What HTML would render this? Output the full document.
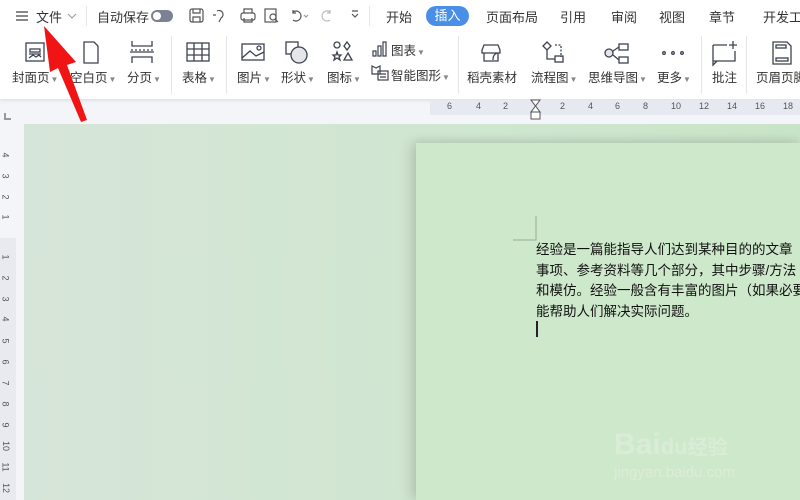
<!DOCTYPE html>
<html><head><meta charset="utf-8"><style>
*{margin:0;padding:0;box-sizing:border-box}
body{width:800px;height:500px;overflow:hidden;position:relative;background:#f4f5f8;font-family:"Liberation Sans","Noto Sans CJK SC",sans-serif;color:#333}
.top{position:absolute;left:0;top:0;width:800px;height:32px;background:#fff}
.t{position:absolute;font-size:13px;top:7px;color:#333;white-space:nowrap}
.rib{position:absolute;left:0;top:32px;width:800px;height:67px;background:#fff;box-shadow:0 2px 3px rgba(0,0,0,.08)}
.lb{position:absolute;font-size:12.5px;color:#333;white-space:nowrap}
.dd{font-size:8px;color:#888;margin-left:1px}
.sep{position:absolute;width:1px;background:#e5e7eb}
.ic{position:absolute}
.doc{position:absolute;left:24px;top:124px;width:776px;height:376px;background:linear-gradient(90deg,#d6e5d9,#cfe6cf 60%,#c8e4c8)}
.page{position:absolute;left:416px;top:143px;width:384px;height:357px;background:#cee8cb;box-shadow:-6px 0 12px rgba(0,0,0,.12),0 -3px 8px rgba(0,0,0,.06)}
.txt{position:absolute;left:536px;top:240px;font-size:13.5px;line-height:20.5px;color:#111;white-space:nowrap;font-family:"Liberation Sans","WenQuanYi Zen Hei",sans-serif}
.vr{position:absolute;left:0;top:238px;width:16px;height:262px;background:#e8eaf0}
.vn{position:absolute;left:3px;font-size:9px;color:#555;transform:rotate(90deg)}
.hn{position:absolute;top:101px;font-size:9px;color:#555}
</style></head><body>
<div class="top">
 <svg class="ic" style="left:15px;top:10px" width="14" height="12"><path d="M1 2h12M1 6h12M1 10h12" stroke="#444" stroke-width="1.3"/></svg>
 <div class="t" style="left:36px">文件</div>
 <svg class="ic" style="left:67px;top:12px" width="10" height="8"><path d="M1 2l4 4 4-4" stroke="#999" fill="none"/></svg>
 <div class="sep" style="left:86px;top:6px;height:20px"></div>
 <div class="t" style="left:97px">自动保存</div>
 <div style="position:absolute;left:151px;top:10px;width:22px;height:12px;border-radius:6px;background:#7c8294"><div style="position:absolute;left:2px;top:2px;width:8px;height:8px;border-radius:4px;background:#fff"></div></div>
 <svg class="ic" style="left:189px;top:7px" width="180" height="18" fill="none" stroke="#555" stroke-width="1.2">
  <rect x="1" y="2" width="13" height="13" rx="2"/><path d="M4 2v4h7V2M4 15v-5h7v5"/>
  <path d="M28 4a4 4 0 1 1 4 7l-2 4M27 8h-3"/>
  <rect x="52" y="6" width="14" height="7" rx="2"/><path d="M55 6V2h8v4M55 11v4h8v-4"/>
  <rect x="76" y="2" width="11" height="13"/><circle cx="84" cy="10" r="3"/><path d="M86 12l3 3"/>
  <path d="M104 5a5 5 0 1 1 0 8M104 3v3h3" /><path d="M115 8l2 2 2-2" stroke="#999"/>
  <path d="M141 5a5 5 0 1 0 0 8M141 3v3h-3" stroke="#bbb"/>
  <path d="M163 7l3 3 3-3M163 4h6"/>
 </svg>
 <div class="sep" style="left:369px;top:6px;height:20px"></div>
 <div class="t" style="left:386px">开始</div>
 <div style="position:absolute;left:426px;top:6px;width:43px;height:20px;border-radius:10px;background:#4a8fe7;color:#fff;font-size:13px;text-align:center;line-height:20px">插入</div>
 <div class="t" style="left:486px">页面布局</div>
 <div class="t" style="left:560px">引用</div>
 <div class="t" style="left:611px">审阅</div>
 <div class="t" style="left:659px">视图</div>
 <div class="t" style="left:709px">章节</div>
 <div class="t" style="left:763px">开发工具</div>
</div>
<div class="rib">
 <svg class="ic" style="left:0;top:9px" width="800" height="26" fill="none" stroke="#3d4250" stroke-width="1.3">
  <rect x="26" y="2" width="18" height="18"/><path d="M29 13h12M29 17l4-3 3 2 3-2 2 2"/><rect x="30" y="8" width="10" height="3"/>
  <path d="M84 1h10l4 4v17H84z"/>
  <path d="M132 0v5h20V0M132 22v-6h20v6M130 11h24" /><path d="M131 9h22" stroke-dasharray="2 2"/>
  <rect x="187" y="2" width="22" height="18"/><path d="M187 8h22M187 14h22M194 2v18M202 2v18"/>
  <rect x="242" y="3" width="22" height="16"/><path d="M242 17l8-7 6 5 8-4" /><circle cx="259" cy="7" r="2"/>
  <rect x="286" y="1" width="12" height="12"/><circle cx="299" cy="14" r="8" fill="#e4e6ea"/>
  <circle cx="337" cy="4" r="3"/><path d="M347 1l3 4-3 4-3-4z"/><path d="M337 11l1 3h3l-2 2 1 3-3-2-3 2 1-3-2-2h3z"/><path d="M348 12l4 7h-8z"/>
  <path d="M484 4h14l2 5v3h-18V9z M484 12v8h14v-8"/><path d="M493 19c0-5 2-6 4-7"/>
  <path d="M543 5l4-4 4 4-4 4z"/><path d="M555 4h6v12" stroke-dasharray="2 1.5"/><rect x="555" y="15" width="8" height="6"/><path d="M547 9v9h8"/>
  <circle cx="609" cy="12" r="4" fill="#e4e6ea"/><rect x="619" y="3" width="9" height="6"/><rect x="619" y="16" width="9" height="6"/><path d="M613 10l6-4M613 14l6 5"/>
  <circle cx="664" cy="12" r="1.3"/><circle cx="673" cy="12" r="1.3"/><circle cx="682" cy="12" r="1.3"/>
  <path d="M713 4h14M735 10v10h-22v-16M713 20v4l4-4M729 4h8M733 0v8"/>
  <path d="M773 1h14l4 4v18h-18z"/><rect x="776" y="17" width="12" height="3"/><rect x="776" y="4" width="10" height="3"/>
 </svg>
 <svg class="ic" style="left:371px;top:9px" width="18" height="16" fill="none" stroke="#3d4250" stroke-width="1.2"><path d="M2 10h3v5H2zM7 5h3v10H7zM12 1h3v14h-3z"/></svg>
 <div class="lb" style="left:12px;top:35px">封面页<span class="dd">▼</span></div>
 <div class="lb" style="left:70px;top:35px">空白页<span class="dd">▼</span></div>
 <div class="lb" style="left:127px;top:35px">分页<span class="dd">▼</span></div>
 <div class="sep" style="left:171px;top:4px;height:58px"></div>
 <div class="lb" style="left:182px;top:35px">表格<span class="dd">▼</span></div>
 <div class="sep" style="left:226px;top:4px;height:58px"></div>
 <div class="lb" style="left:237px;top:35px">图片<span class="dd">▼</span></div>
 <div class="lb" style="left:281px;top:35px">形状<span class="dd">▼</span></div>
 <div class="lb" style="left:327px;top:35px">图标<span class="dd">▼</span></div>
 <div class="lb" style="left:391px;top:8px">图表<span class="dd">▼</span></div>
 <svg class="ic" style="left:371px;top:33px" width="18" height="16" fill="none" stroke="#3d4250" stroke-width="1.2"><path d="M1 1l4 2 4-2v8H1z"/><rect x="7" y="6" width="10" height="9"/><path d="M9 9h6M9 12h6"/></svg>
 <div class="lb" style="left:391px;top:33px">智能图形<span class="dd">▼</span></div>
 <div class="sep" style="left:458px;top:4px;height:58px"></div>
 <div class="lb" style="left:467px;top:35px">稻壳素材</div>
 <div class="lb" style="left:531px;top:35px">流程图<span class="dd">▼</span></div>
 <div class="lb" style="left:588px;top:35px">思维导图<span class="dd">▼</span></div>
 <div class="lb" style="left:657px;top:35px">更多<span class="dd">▼</span></div>
 <div class="sep" style="left:701px;top:4px;height:58px"></div>
 <div class="lb" style="left:712px;top:35px">批注</div>
 <div class="sep" style="left:746px;top:4px;height:58px"></div>
 <div class="lb" style="left:756px;top:35px">页眉页脚</div>
</div>
<div style="position:absolute;left:430px;top:100px;width:370px;height:15px;background:#e6e9ef"></div>
<div class="hn" style="left:447px">6</div><div class="hn" style="left:476px">4</div><div class="hn" style="left:503px">2</div>
<div class="hn" style="left:560px">2</div><div class="hn" style="left:588px">4</div><div class="hn" style="left:615px">6</div><div class="hn" style="left:643px">8</div><div class="hn" style="left:671px">10</div><div class="hn" style="left:699px">12</div><div class="hn" style="left:727px">14</div><div class="hn" style="left:755px">16</div><div class="hn" style="left:783px">18</div>
<svg class="ic" style="left:530px;top:99px" width="12" height="22" fill="#fff" stroke="#555"><path d="M1 1h9L5.5 7z M5.5 7L1 13h9z"/><rect x="1" y="13" width="9" height="7"/></svg>
<svg class="ic" style="left:4px;top:112px" width="8" height="8"><path d="M1 1v6h6" stroke="#999" stroke-width="2" fill="none"/></svg>
<div class="vr"></div>
<div class="vn" style="top:150px">4</div><div class="vn" style="top:171px">3</div><div class="vn" style="top:192px">2</div><div class="vn" style="top:212px">1</div>
<div class="vn" style="top:252px">1</div><div class="vn" style="top:273px">2</div><div class="vn" style="top:294px">3</div><div class="vn" style="top:314px">4</div><div class="vn" style="top:336px">5</div><div class="vn" style="top:357px">6</div><div class="vn" style="top:378px">7</div><div class="vn" style="top:399px">8</div><div class="vn" style="top:420px">9</div><div class="vn" style="top:441px;left:1px">10</div><div class="vn" style="top:462px;left:1px">11</div><div class="vn" style="top:483px;left:1px">12</div>
<div class="doc"></div>
<div class="page"></div>
<svg class="ic" style="left:512px;top:215px" width="26" height="26"><path d="M24 1v24H1" stroke="#9aaa9a" fill="none"/></svg>
<div class="txt">经验是一篇能指导人们达到某种目的的文章<br>事项、参考资料等几个部分，其中步骤/方法<br>和模仿。经验一般含有丰富的图片（如果必要<br>能帮助人们解决实际问题。</div>
<div style="position:absolute;left:536px;top:321px;width:2px;height:16px;background:#2a1f30"></div>
<div style="position:absolute;left:614px;top:428px;font-size:30px;font-weight:bold;color:#e0eedc;opacity:.7;white-space:nowrap">Bai<span style="font-size:22px">du</span><span style="font-size:20px">经验</span></div>
<div style="position:absolute;left:614px;top:464px;font-size:15px;color:#e0eedc;opacity:.8;white-space:nowrap">jingyan.baidu.com</div>
<svg class="ic" style="left:30px;top:20px" width="70" height="110"><path d="M14 6L46 42 37 45 57 100 51 102 28 48 20 52z" fill="#f01414"/></svg>
</body></html>
